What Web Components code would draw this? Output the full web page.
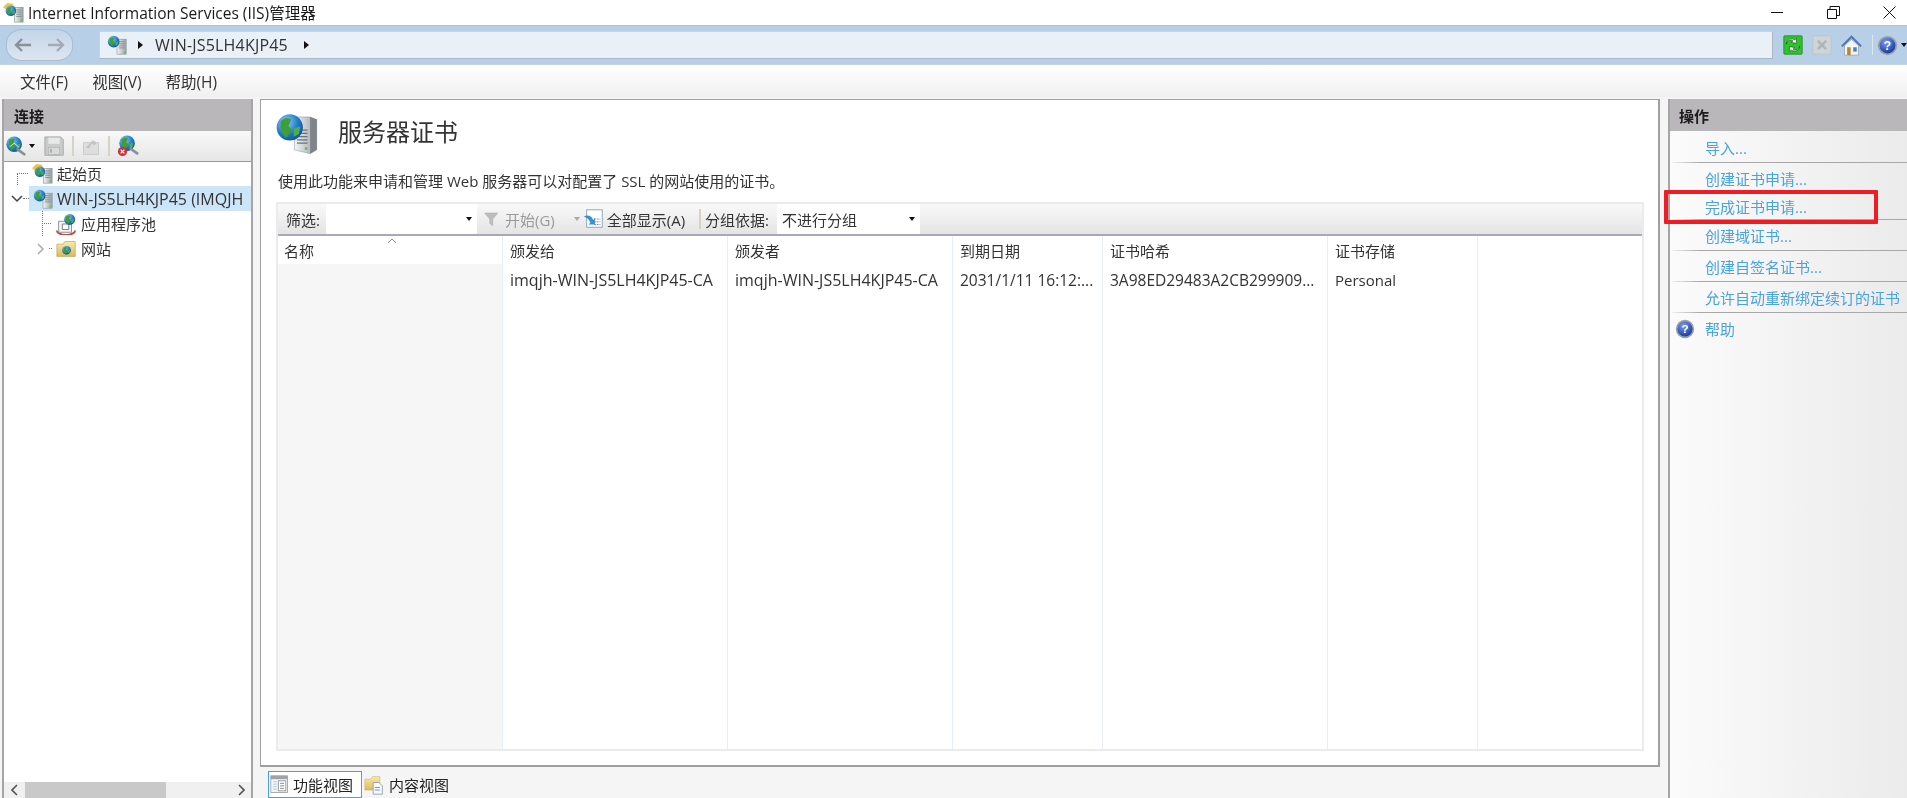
<!DOCTYPE html>
<html lang="zh">
<head>
<meta charset="utf-8">
<title>IIS</title>
<style>
  html, body { margin: 0; height: 100%; overflow: hidden; background: #f5f5f5; }
  body { font: 15px "Open Sans", "Noto Sans CJK SC", sans-serif; color: #222; }
</style>
</head>
<body>
<iis-app></iis-app>
<script>
const GLOBE = (cx, cy, r) => `
  <circle cx="${cx}" cy="${cy}" r="${r}" fill="url(#sea)"/>
  <path d="M${cx - r * .7} ${cy - r * .5}q${r * .5} ${-r * .4} ${r * .8} ${-r * .1}l${-r * .2} ${r * .5}l${r * .3} ${r * .3}l${-r * .5} ${r * .6}l${-r * .4} ${-r * .5}z" fill="#3f9e3a"/>
  <path d="M${cx + r * .3} ${cy + r * .1}l${r * .5} ${-r * .2}l${-r * .1} ${r * .6}l${-r * .4} ${r * .2}z" fill="#4fae45"/>`;
const TOWER = (x, y, w, h) => `
  <rect x="${x}" y="${y}" width="${w}" height="${h}" fill="url(#steel)" stroke="#7d8488" stroke-width=".6"/>
  <path d="M${x + 2} ${y + 3}h${w - 4}M${x + 2} ${y + 5.5}h${w - 4}M${x + 2} ${y + 8}h${w - 4}M${x + 2} ${y + 10.5}h${w - 4}" stroke="#6f777c" stroke-width=".8"/>
  <rect x="${x + w - 3}" y="${y + h - 3}" width="2" height="2" fill="#5fc34a"/>`;
const DEFS = `<defs>
  <radialGradient id="sea" cx=".35" cy=".3" r=".8"><stop offset="0" stop-color="#8fd0f5"/><stop offset=".6" stop-color="#1f78c8"/><stop offset="1" stop-color="#134e96"/></radialGradient>
  <linearGradient id="steel" x1="0" x2="1"><stop offset="0" stop-color="#f4f5f5"/><stop offset="1" stop-color="#9aa1a5"/></linearGradient>
  <linearGradient id="leaf" x1="0" y1="0" x2="0" y2="1"><stop offset="0" stop-color="#fbe9a8"/><stop offset="1" stop-color="#e0b95a"/></linearGradient>
  <radialGradient id="ball" cx=".4" cy=".3" r=".8"><stop offset="0" stop-color="#7fa0ea"/><stop offset=".7" stop-color="#2a4fb5"/><stop offset="1" stop-color="#1c3380"/></radialGradient>
</defs>`;
const ICONS = {
  server: TOWER(12, 5, 11, 18) + GLOBE(8, 8, 7),
  start: TOWER(13, 6, 10, 17) + `<path d="M0 6l5-5 6 1 3 5-6 5z" fill="#f2c33b"/>` + GLOBE(9, 10, 6),
  bigserver: `<path d="M14 3h12l5 2v23l-5 3-12-3z" fill="url(#steel)" stroke="#8b9295" stroke-width=".4"/><path d="M26 3l5 2v23l-5 3z" fill="#7e8589"/>
    <path d="M16 13h8M16 15.500h8M16 18h8M16 20.500h8M16 23h8" stroke="#6b7276"/><rect x="22" y="26" width="2" height="2" fill="#5fc34a"/>` + GLOBE(10.5, 11, 10),
  pool: `<path d="M2 19a10 5 0 0 0 20 0" fill="none" stroke="#c24a3c" stroke-width="2"/><rect x="4" y="9" width="14" height="12" fill="#f3f3f3" stroke="#8a8f93"/>
    <path d="M8 12h7v6H8z" fill="#fff" stroke="#777"/>` + GLOBE(16, 7, 6),
  site: `<path d="M1 7h7l2-3h12v17H1z" fill="url(#leaf)" stroke="#b99a4c" stroke-width=".7"/>` + GLOBE(12, 14, 5),
  connect: GLOBE(10, 10, 8.5) + `<path d="M14 16l7 5" stroke="#8a9095" stroke-width="3" stroke-linecap="round"/><path d="M5 13l5-4 5 4" fill="none" stroke="#dfe7ee" stroke-width="1"/>`,
  save: `<path d="M1 1h18l3 3v18H1z" fill="#c9cbcb" stroke="#a2a5a5"/><rect x="5" y="2" width="13" height="7" fill="#e8e8e8"/><rect x="5" y="13" width="13" height="8" fill="#dadada" stroke="#a8a8a8" stroke-width=".6"/><rect x="7" y="15" width="2" height="4" fill="#a5a5a5"/>`,
  up: `<rect x="3" y="8" width="18" height="14" fill="#dedede" stroke="#c6c6c6"/><path d="M6 14l8-9 5 3-3 3-3-2-3 6z" fill="#c4c4c4"/>`,
  disconnect: GLOBE(11, 9, 8.5) + `<path d="M15 15l7 5" stroke="#8a9095" stroke-width="3" stroke-linecap="round"/><circle cx="6" cy="18" r="5" fill="#cf2f3a"/><path d="M4 16l4 4M8 16l-4 4" stroke="#fff" stroke-width="1.4"/>`,
  refresh: `<rect x="1" y="1" width="22" height="22" rx="1" fill="#2fc42f" stroke="#1d8a1d"/><path d="M4 11c1-5 6-6 8-4l-2 2 6 1V4l-2 2c-4-3-10-1-10 5z M20 13c-1 5-6 6-8 4l2-2-6-1v6l2-2c4 3 10 1 10-5z" fill="#fff" stroke="#123d12" stroke-width=".7"/>`,
  stop: `<rect x="1" y="1" width="22" height="22" rx="2" fill="#cfd4d9" stroke="#bcc3c9"/><path d="M7 7l10 10M17 7L7 17" stroke="#aeb4b9" stroke-width="3"/>`,
  home: `<path d="M4 12v11h16V12L12 5z" fill="#f4f4f4" stroke="#8a8f93" stroke-width=".7"/><path d="M1 13L12 2l11 11" fill="none" stroke="#4c77b8" stroke-width="2.4"/><rect x="7" y="14" width="4" height="9" fill="#b9862e"/><rect x="14" y="14" width="4" height="5" fill="#3d87c7"/>`,
  help: `<circle cx="12" cy="12" r="11" fill="#9aa0a6"/><circle cx="12" cy="12" r="9" fill="url(#ball)"/><text x="12" y="17" font-family="Liberation Sans" font-weight="700" font-size="14" fill="#fff" text-anchor="middle">?</text>`,
  funnel: `<path d="M2 4h18l-7 8v9l-4-3v-6z" fill="#bdbdbd" stroke="#a6a6a6" stroke-width=".6"/>`,
  showall: `<rect x="4" y="2" width="17" height="19" fill="#fff" stroke="#8aa0b8"/><path d="M12 12h7M12 15h7M12 18h7" stroke="#6a86a6" stroke-dasharray="2 1"/><path d="M1 9c5-2 9 0 10 4l2-2v7H6l2-2c-1-3-3-5-7-7z" fill="#3c8fd0"/>`,
  features: `<rect x="1" y="1" width="20" height="20" fill="#f3f5f8" stroke="#9a9fa4"/><rect x="1" y="1" width="20" height="4" fill="#9da3a8"/><path d="M4 8h4M4 11h4M4 14h4M4 17h4" stroke="#9cc0e0"/><rect x="10" y="7" width="9" height="12" fill="#fff" stroke="#8f8f8f"/><path d="M12 10h5M12 13h5M12 16h5" stroke="#777"/>`,
  content: `<path d="M1 5h7l2-3h9v16H1z" fill="url(#leaf)" stroke="#bda55e" stroke-width=".6"/><path d="M11 9h7l4 4v10H11z" fill="#f7f9fb" stroke="#8a99a8"/><path d="M13 15h6M13 18h6" stroke="#3c8fd0"/>`
};

class IisIcon extends HTMLElement {
  connectedCallback() {
    const size = this.getAttribute('size') || 20;
    const box = this.getAttribute('box') || 24;
    this.attachShadow({mode: 'open'}).innerHTML = `
      <style>:host { display: inline-flex; flex: none; } svg { display: block; }</style>
      <svg width="${size}" height="${size}" viewBox="0 0 ${box} ${box}">${DEFS}${ICONS[this.getAttribute('name')]}</svg>`;
  }
}
customElements.define('iis-icon', IisIcon);

class IisTitlebar extends HTMLElement {
  constructor() {
    super();
    this.attachShadow({mode: 'open'}).innerHTML = `
    <style>
      :host { display: flex; align-items: center; height: 25px; background: #fff; padding-left: 3px; }
      .name { font-size: 15.500px; margin-left: 4px; flex: 1; color: #1a1a1a; white-space: nowrap; }
      .ctl { display: flex; gap: 43px; padding-right: 11px; }
      svg { display: block; }
    </style>
    <iis-icon name="start" size="21"></iis-icon>
    <span class="name">Internet Information Services (IIS)管理器</span>
    <div class="ctl">
      <svg width="13" height="13"><path d="M0 6.5h12" stroke="#111"/></svg>
      <svg width="13" height="13"><path d="M.5 3.5h9v9h-9zM3 3V.5h9.500v9H10" fill="none" stroke="#111"/></svg>
      <svg width="13" height="13"><path d="M.5.5l12 12M12.500.5l-12 12" stroke="#111"/></svg>
    </div>`;
  }
}
customElements.define('iis-titlebar', IisTitlebar);

class IisAddressbar extends HTMLElement {
  constructor() {
    super();
    this.attachShadow({mode: 'open'}).innerHTML = `
    <style>
      :host { display: flex; align-items: center; height: 40px; box-sizing: border-box; padding: 0 0 0 6px;
        background: #b8cfe8; border-top: 1px solid #a9c3e0; border-bottom: 1px solid #c5d5e8; }
      .nav { width: 67px; height: 32px; box-sizing: border-box; border: 1px solid #a9bdd3; border-radius: 16px / 14px;
        background: linear-gradient(#c3d5e8, #dce6f0); display: flex; align-items: center; justify-content: space-around;
        margin-right: 26px; flex: none; }
      .addr { flex: 1; height: 28px; box-sizing: border-box; background: #e9f0f8; border: 1px solid #c4d4e4;
        border-right-color: #aab8c6; border-bottom-color: #aab8c6; display: flex; align-items: center; padding-left: 7px; color: #333; }
      .tri { width: 0; height: 0; border: 4px solid transparent; border-left: 5px solid #111; border-right: 0; }
      .host { margin: 0 16px 0 12px; font-size: 16px; letter-spacing: .2px; }
      .first { margin-left: 11px; }
      .tools { display: flex; align-items: center; gap: 9px; margin-left: 10px; }
      .sep { width: 1px; height: 20px; background: #dfe6ee; margin-left: 1px; }
      .drop { width: 0; height: 0; border: 3px solid transparent; border-top: 4px solid #111; border-bottom: 0; margin: 0 0 0 -6px; }
    </style>
    <div class="nav">
      <svg width="20" height="16"><path d="M18 8H4M9 2L3 8l6 6" fill="none" stroke="#8b9198" stroke-width="2.400"/></svg>
      <svg width="20" height="16"><path d="M2 8h14M11 2l6 6-6 6" fill="none" stroke="#a4abb2" stroke-width="2.400"/></svg>
    </div>
    <div class="addr">
      <iis-icon name="server" size="20"></iis-icon>
      <span class="tri first"></span><span class="host">WIN-JS5LH4KJP45</span><span class="tri"></span>
    </div>
    <div class="tools">
      <iis-icon name="refresh" size="20"></iis-icon>
      <iis-icon name="stop" size="20"></iis-icon>
      <iis-icon name="home" size="21"></iis-icon>
      <span class="sep"></span>
      <iis-icon name="help" size="21" style="margin-left:-5px"></iis-icon>
      <span class="drop"></span>
    </div>`;
  }
}
customElements.define('iis-addressbar', IisAddressbar);

class IisMenubar extends HTMLElement {
  constructor() {
    super();
    this.attachShadow({mode: 'open'}).innerHTML = `
    <style>
      :host { display: flex; align-items: center; gap: 24px; height: 32px; padding-left: 20px; font-size: 15.500px;
        background: linear-gradient(#fff, #f0f0f0); color: #333; }
    </style>
    <span>文件(F)</span><span>视图(V)</span><span>帮助(H)</span>`;
  }
}
customElements.define('iis-menubar', IisMenubar);

class IisPaneHead extends HTMLElement {
  constructor() {
    super();
    this.attachShadow({mode: 'open'}).innerHTML = `
    <style>
      :host { display: flex; align-items: center; height: 32px; box-sizing: border-box; padding-left: 10px;
        background: #b9b7b9; font-weight: 700; color: #1c1c1c; }
    </style>
    <slot></slot>`;
  }
}
customElements.define('iis-pane-head', IisPaneHead);

class IisTreeRow extends HTMLElement {
  constructor() {
    super();
    this.attachShadow({mode: 'open'}).innerHTML = `
    <style>
      :host { display: flex; align-items: center; height: 25px; white-space: nowrap; overflow: hidden; color: #333; }
      .body { display: flex; align-items: center; gap: 4px; height: 100%; flex: 1; padding-left: 4px; }
      :host([selected]) .body { background: #cde5f8; }
      .lead { display: flex; align-items: center; flex: none; height: 100%; position: relative; }
    </style>
    <div class="lead"><slot name="lead"></slot></div>
    <div class="body"><slot name="icon"></slot><slot></slot></div>`;
  }
}
customElements.define('iis-tree-row', IisTreeRow);

class IisConnections extends HTMLElement {
  constructor() {
    super();
    this.attachShadow({mode: 'open'}).innerHTML = `
    <style>
      :host { display: flex; flex-direction: column; width: 251px; box-sizing: border-box; flex: none; margin-left: 2px;
        border-left: 2px solid #a5a5a5; border-right: 2px solid #a5a5a5; background: #fff; }
      .tools { display: flex; align-items: center; height: 31px; box-sizing: border-box; padding-left: 1px;
        background: linear-gradient(#f8f8f8, #e6e6e6); border-bottom: 1px solid #9a9a9a; }
      .drop { width: 0; height: 0; border: 3px solid transparent; border-top: 4px solid #111; border-bottom: 0; margin: 0 9px 0 2px; }
      .sep { width: 2px; height: 20px; background: #d5d2c6; margin: 0 7px; }
      .tree { flex: 1; overflow: hidden; margin-top: -1px; }
      .dots { border-top: 1px dotted #777; }
      .lead { display: flex; align-items: center; height: 100%; position: relative; }
      svg { display: block; }
      .scroll { display: flex; align-items: center; height: 16px; background: #f0f0f0; }
      .scroll .a { width: 21px; display: flex; justify-content: center; flex: none; }
      .thumb { width: 141px; height: 100%; background: #c9c9c9; }
      .fill { flex: 1; }
      .up { position: absolute; border-left: 1px dotted #777; }
      .latin { font-size: 16px; }
    </style>
    <iis-pane-head>连接</iis-pane-head>
    <div class="tools">
      <iis-icon name="connect" size="22"></iis-icon><span class="drop"></span>
      <iis-icon name="save" size="21"></iis-icon><span class="sep"></span>
      <iis-icon name="up" size="20"></iis-icon><span class="sep"></span>
      <iis-icon name="disconnect" size="22"></iis-icon>
    </div>
    <div class="tree">
      <iis-tree-row>
        <div slot="lead" class="lead" style="padding-left:13px">
          <span class="up" style="left:13px;bottom:-1px;top:12px"></span><span class="dots" style="width:11px"></span></div>
        <iis-icon slot="icon" name="start" size="21"></iis-icon>起始页
      </iis-tree-row>
      <iis-tree-row selected>
        <div slot="lead" class="lead" style="padding-left:7px"><svg width="12" height="8"><path d="M1 1l5 5 5-5" fill="none" stroke="#444" stroke-width="1.500"/></svg><span class="dots" style="width:6px"></span></div>
        <iis-icon slot="icon" name="server" size="20"></iis-icon><span class="latin">WIN-JS5LH4KJP45 (IMQJH\</span>
      </iis-tree-row>
      <iis-tree-row>
        <div slot="lead" class="lead" style="padding-left:38px">
          <span class="up" style="left:38px;top:-2px;bottom:-12px"></span><span class="dots" style="width:9px"></span></div>
        <iis-icon slot="icon" name="pool" size="22"></iis-icon>应用程序池
      </iis-tree-row>
      <iis-tree-row>
        <div slot="lead" class="lead" style="padding-left:33px;gap:4px"><svg width="8" height="12"><path d="M1 1l5 5-5 5" fill="none" stroke="#aaa" stroke-width="1.500"/></svg><span class="dots" style="width:3px"></span></div>
        <iis-icon slot="icon" name="site" size="21"></iis-icon>网站
      </iis-tree-row>
    </div>
    <div class="scroll">
      <span class="a"><svg width="8" height="12"><path d="M6 1L1 6l5 5" fill="none" stroke="#555" stroke-width="1.600"/></svg></span>
      <span class="thumb"></span><span class="fill"></span>
      <span class="a"><svg width="8" height="12"><path d="M2 1l5 5-5 5" fill="none" stroke="#555" stroke-width="1.600"/></svg></span>
    </div>`;
  }
}
customElements.define('iis-connections', IisConnections);

class IisFilterbar extends HTMLElement {
  constructor() {
    super();
    this.attachShadow({mode: 'open'}).innerHTML = `
    <style>
      :host { display: flex; align-items: center; height: 32px; box-sizing: border-box; color: #333;
        background: linear-gradient(#f9f9f9, #e4e4e4); border-bottom: 2px solid #a8a8b8; white-space: nowrap; }
      .box { background: #fff; height: 100%; display: flex; align-items: center; justify-content: space-between;
        box-sizing: border-box; padding: 0 5px; flex: none; }
      .drop { width: 0; height: 0; border: 3px solid transparent; border-top: 4px solid #111; border-bottom: 0; }
      .off { color: #9a9a9a; }
      .lbl { padding-left: 8px; width: 48px; box-sizing: border-box; flex: none; }
      .sep { width: 2px; height: 20px; background: #d5d2c6; margin: 0 4px 0 14px; }
      .dim { width: 0; height: 0; border: 3px solid transparent; border-top: 4px solid #aaa; border-bottom: 0; margin: 0 3px 0 19px; }
    </style>
    <span class="lbl">筛选:</span>
    <div class="box" style="width:151px;margin-right:6px"><span></span><span class="drop"></span></div>
    <iis-icon name="funnel" size="18" style="margin-right:4px"></iis-icon>
    <span class="off">开始(G)</span><span class="dim"></span>
    <iis-icon name="showall" size="22" style="margin-right:2px"></iis-icon>
    <span>全部显示(A)</span><span class="sep"></span>
    <span>分组依据:</span>
    <div class="box" style="width:143px;margin-left:8px"><span>不进行分组</span><span class="drop"></span></div>`;
  }
}
customElements.define('iis-filterbar', IisFilterbar);

class IisCertTable extends HTMLElement {
  constructor() {
    super();
    const heads = ['名称', '颁发给', '颁发者', '到期日期', '证书哈希', '证书存储', ''];
    const row = ['', 'imqjh-WIN-JS5LH4KJP45-CA', 'imqjh-WIN-JS5LH4KJP45-CA', '2031/1/11 16:12:...', '3A98ED29483A2CB299909...', 'Personal', ''];
    const sizes = ['', 'a', 'a', 'b', 'b', '', ''];
    const cells = (list, cls) => list.map((t, i) => `<div class="${cls} ${cls === 'r' ? sizes[i] : ''}">${t}</div>`).join('');
    this.attachShadow({mode: 'open'}).innerHTML = `
    <style>
      :host { display: grid; flex: 1; grid-template-columns: 225px 225px 225px 150px 225px 150px 1fr;
        grid-template-rows: 28px 31px 1fr; background: #fff; color: #333; position: relative; }
      div { border-right: 1px solid #e6eef7; padding-left: 7px; display: flex; align-items: center; white-space: nowrap; min-width: 0; }
      div.first { padding-left: 6px; }
      div.last { border-right: 0; }
      div.col1 { background: #f6f6f6; }
      .a { font-size: 16px; }
      .b { font-size: 15.500px; }
      svg { position: absolute; left: 109px; top: 2px; }
    </style>
    ${cells(heads, 'h')}${cells(row, 'r')}${cells(['', '', '', '', '', '', ''], 'e')}
    <svg width="10" height="6"><path d="M1 5l4-4 4 4" fill="none" stroke="#888"/></svg>`;
    // first column is grey below the header, the last one has no right edge
    const all = this.shadowRoot.querySelectorAll('div');
    all.forEach((d, i) => {
      if (i % 7 === 6) d.classList.add('last');
      if (i % 7 === 0) d.classList.add('first');
      if (i % 7 === 0 && i > 0) d.classList.add('col1');
    });
  }
}
customElements.define('iis-cert-table', IisCertTable);

class IisFeatures extends HTMLElement {
  constructor() {
    super();
    this.attachShadow({mode: 'open'}).innerHTML = `
    <style>
      :host { display: flex; flex-direction: column; flex: 1; min-width: 0; margin: 0 8px 0 7px; }
      .page { flex: 1; display: flex; flex-direction: column; box-sizing: border-box; background: #fff; min-height: 0;
        border: 1px solid #9f9f9f; border-width: 1px 2px 2px 1px; padding: 14px 14px 14px 15px; }
      .head { display: flex; align-items: center; height: 40px; gap: 20px; }
      h1 { font-size: 24px; font-weight: 400; margin: -4px 0 0; color: #333; line-height: 1; }
      p { margin: 17px 0 11px 2px; line-height: 20px; color: #333; }
      .list { flex: 1; display: flex; flex-direction: column; border: 2px solid #ebebeb; min-height: 0; }
      .tabs { display: flex; align-items: center; height: 31px; box-sizing: border-box; padding: 4px 0 0 8px; }
      .tab { display: flex; align-items: center; gap: 5px; height: 27px; box-sizing: border-box; padding: 0 3px 0 2px; color: #222; }
      .on { background: #fff; border: 1px solid #4b9ee3; width: 94px; gap: 3px; padding-left: 1px; }
    </style>
    <div class="page">
      <div class="head"><iis-icon name="bigserver" size="42" box="32"></iis-icon><h1>服务器证书</h1></div>
      <p>使用此功能来申请和管理 Web 服务器可以对配置了 SSL 的网站使用的证书。</p>
      <div class="list">
        <iis-filterbar></iis-filterbar>
        <iis-cert-table></iis-cert-table>
      </div>
    </div>
    <div class="tabs">
      <div class="tab on"><iis-icon name="features" size="20"></iis-icon>功能视图</div>
      <div class="tab"><iis-icon name="content" size="20"></iis-icon>内容视图</div>
    </div>`;
  }
}
customElements.define('iis-features', IisFeatures);

class IisAction extends HTMLElement {
  constructor() {
    super();
    this.attachShadow({mode: 'open'}).innerHTML = `
    <style>
      :host { display: flex; align-items: center; height: 31px; box-sizing: border-box; padding-left: 35px;
        color: #4ba3dc; white-space: nowrap; position: relative; }
      :host([short]) { height: 26px; padding-bottom: 2px; }
      :host([line])::after { content: ""; position: absolute; left: 2px; right: 0; bottom: 0; height: 1px;
        background: linear-gradient(90deg, #eee, #a8a8a8 12%, #a8a8a8); }
      ::slotted(iis-icon) { position: absolute; left: 5px; }
    </style>
    <slot></slot>`;
  }
}
customElements.define('iis-action', IisAction);

class IisActions extends HTMLElement {
  constructor() {
    super();
    this.attachShadow({mode: 'open'}).innerHTML = `
    <style>
      :host { display: flex; flex-direction: column; width: 239px; flex: none; box-sizing: border-box;
        border-left: 2px solid #a5a5a5; background: linear-gradient(90deg, #fbfbfb, #ebebeb); position: relative; }
      iis-pane-head { padding-left: 9px; }
      .list { padding-top: 1px; }
      .mark { position: absolute; left: -6px; top: 91px; width: 214px; height: 34px; box-sizing: border-box;
        border: 4px solid #ee1c25; border-radius: 1px; }
    </style>
    <iis-pane-head>操作</iis-pane-head>
    <div class="list">
      <iis-action line>导入...</iis-action>
      <iis-action>创建证书申请...</iis-action>
      <iis-action line short>完成证书申请...</iis-action>
      <iis-action line>创建域证书...</iis-action>
      <iis-action line>创建自签名证书...</iis-action>
      <iis-action line>允许自动重新绑定续订的证书</iis-action>
      <iis-action><iis-icon name="help" size="20"></iis-icon>帮助</iis-action>
    </div>
    <div class="mark"></div>`;
  }
}
customElements.define('iis-actions', IisActions);

class IisApp extends HTMLElement {
  constructor() {
    super();
    this.attachShadow({mode: 'open'}).innerHTML = `
    <style>
      :host { display: flex; flex-direction: column; height: 100vh; overflow: hidden; filter: blur(.35px); }
      main { flex: 1; display: flex; min-height: 0; padding-top: 2px; background: #f5f5f5; }
    </style>
    <iis-titlebar></iis-titlebar>
    <iis-addressbar></iis-addressbar>
    <iis-menubar></iis-menubar>
    <main>
      <iis-connections></iis-connections>
      <iis-features></iis-features>
      <iis-actions></iis-actions>
    </main>`;
  }
}
customElements.define('iis-app', IisApp);
</script>
</body>
</html>
